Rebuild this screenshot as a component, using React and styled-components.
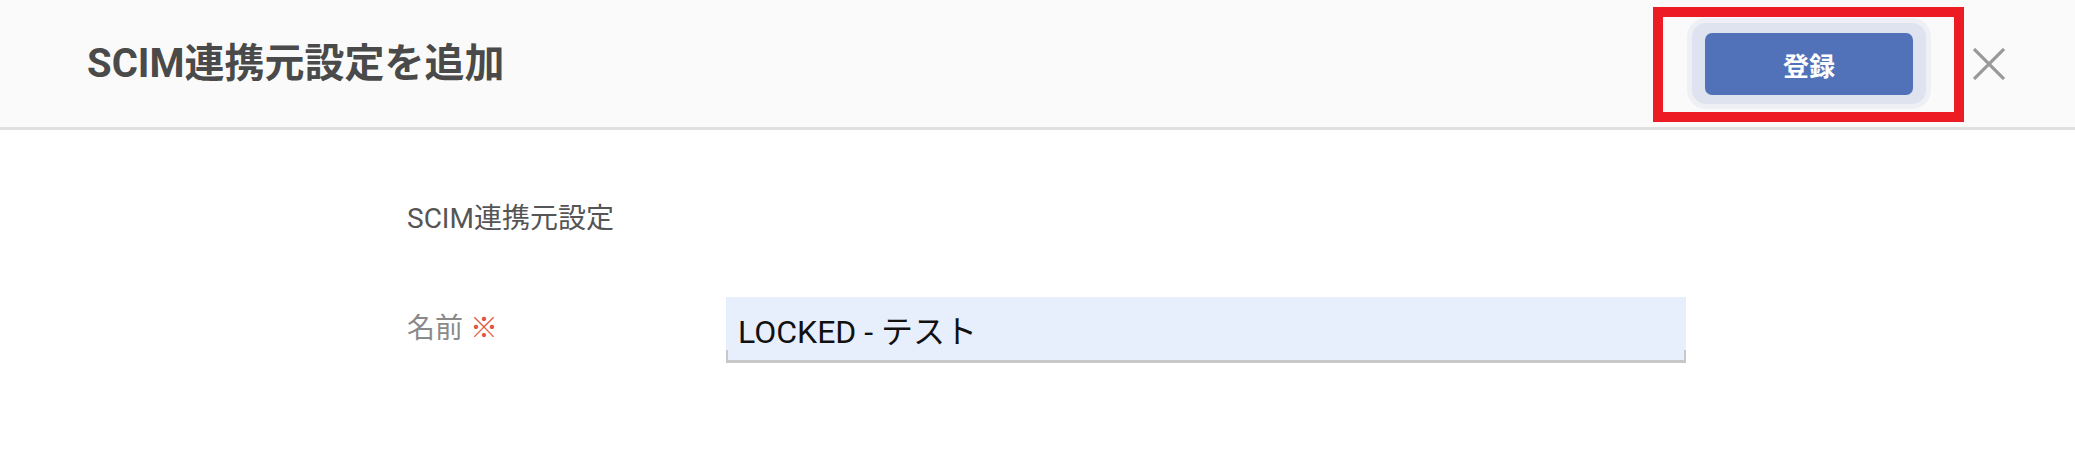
import React from 'react';
import styled, { createGlobalStyle } from 'styled-components';

const GlobalStyle = createGlobalStyle`
  html, body {
    margin: 0;
    padding: 0;
    background: #fff;
  }
  body {
    font-family: Roboto, "Noto Sans CJK JP", sans-serif;
  }
  * {
    box-sizing: border-box;
  }
`;

const Page = styled.div`
  width: 2075px;
  min-height: 457px;
  background: #fff;
`;

const Header = styled.header`
  display: flex;
  align-items: center;
  justify-content: space-between;
  box-sizing: content-box;
  height: 127px;
  padding: 0 70px 0 87px;
  background: #fafafa;
  border-bottom: 3px solid #e0e0e0;
`;

const Title = styled.h1`
  margin: 0;
  font-size: 40px;
  font-weight: 700;
  line-height: 1;
  color: #4a4a4a;
  letter-spacing: 0;
`;

const HeaderActions = styled.div`
  display: flex;
  align-items: center;
  gap: 47px;
`;

const FocusRing = styled.div`
  position: relative;
  padding: 10px 13px 9px;
  border-radius: 14px;
  background: #dfe3ef;
  box-shadow: 0 0 0 5px #eef0f6;
`;

const Highlight = styled.span`
  position: absolute;
  left: -39px;
  top: -16px;
  right: -38px;
  bottom: -18px;
  border: 10px solid #ed1c24;
  pointer-events: none;
`;

const SubmitButton = styled.button`
  display: flex;
  align-items: center;
  justify-content: center;
  width: 208px;
  height: 62px;
  padding: 0;
  border: none;
  border-radius: 7px;
  background: #5171b8;
  color: #fff;
  font-family: inherit;
  font-size: 26px;
  font-weight: 700;
  cursor: pointer;
`;

const CloseButton = styled.button`
  display: flex;
  align-items: center;
  justify-content: center;
  width: 32px;
  height: 32px;
  padding: 0;
  border: none;
  background: transparent;
  cursor: pointer;
`;

const Body = styled.main`
  padding: 69px 0 0 407px;
`;

const SectionTitle = styled.h2`
  margin: 0;
  font-size: 28px;
  font-weight: 400;
  line-height: 40px;
  color: #555;
`;

const FormRow = styled.div`
  display: flex;
  align-items: center;
  margin-top: 58px;
`;

const FieldLabel = styled.label`
  width: 319px;
  flex: none;
  font-size: 28px;
  line-height: 40px;
  color: #8a8a8a;
  padding-bottom: 3px;
`;

const Required = styled.span`
  margin-left: 7px;
  color: #e0553f;
`;

const InputField = styled.div`
  position: relative;
  width: 960px;
  border-bottom: 3px solid #c8c8c8;

  &::before,
  &::after {
    content: '';
    position: absolute;
    bottom: 0;
    width: 2px;
    height: 10px;
    background: #c8c8c8;
  }
  &::before { left: 0; }
  &::after { right: 0; }
`;

const TextInput = styled.input`
  display: block;
  width: 100%;
  height: 63px;
  padding: 0 12px;
  border: none;
  outline: none;
  background: #e8effc;
  color: #111;
  font-family: inherit;
  font-size: 32px;
`;

const CloseIcon = () => (
  <svg width="32" height="32" viewBox="0 0 32 32">
    <path d="M1 1 L31 31 M31 1 L1 31" stroke="#999" strokeWidth="3.2" fill="none" />
  </svg>
);

const App = () => (
  <Page>
    <GlobalStyle />
    <Header>
      <Title>SCIM連携元設定を追加</Title>
      <HeaderActions>
        <FocusRing>
          <SubmitButton type="button">登録</SubmitButton>
          <Highlight />
        </FocusRing>
        <CloseButton type="button" aria-label="閉じる">
          <CloseIcon />
        </CloseButton>
      </HeaderActions>
    </Header>
    <Body>
      <SectionTitle>SCIM連携元設定</SectionTitle>
      <FormRow>
        <FieldLabel htmlFor="name">
          名前<Required>※</Required>
        </FieldLabel>
        <InputField>
          <TextInput id="name" defaultValue="LOCKED - テスト" />
        </InputField>
      </FormRow>
    </Body>
  </Page>
);

export default App;
